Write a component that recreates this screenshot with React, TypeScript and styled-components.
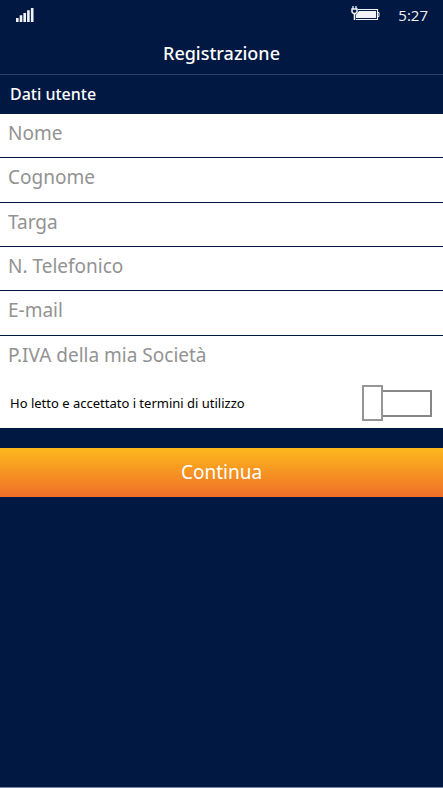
import React, { useState } from "react";
import styled, { createGlobalStyle } from "styled-components";

const NAVY = "#001842";

const GlobalStyle = createGlobalStyle`
  *, *::before, *::after { box-sizing: border-box; }
  body {
    margin: 0;
    background: ${NAVY};
    font-family: "Noto Sans", "Open Sans", sans-serif;
  }
`;

const Screen = styled.div`
  display: flex;
  flex-direction: column;
  min-height: 100vh;
  background: ${NAVY};
  border-bottom: 1px solid #7584a0;
`;

const StatusBar = styled.div`
  display: flex;
  align-items: center;
  height: 30px;
  padding: 0 15px 0 16px;
  color: #f1f3f7;
`;

const Signal = styled.svg`
  margin-right: auto;
`;

const Battery = styled.svg`
  margin-bottom: 2px;
`;

const Clock = styled.time`
  margin-left: 18px;
  font-family: "Open Sans", "Noto Sans", sans-serif;
  font-size: 15px;
  line-height: 30px;
`;

const Header = styled.header`
  height: 45px;
  border-bottom: 1px solid #2c406a;
`;

const Title = styled.h1`
  margin: 0;
  color: #fff;
  font-size: 18px;
  font-weight: 500;
  line-height: 46px;
  text-align: center;
`;

const SectionTitle = styled.h2`
  margin: 0;
  padding: 0 10px;
  color: #fff;
  font-size: 16px;
  font-weight: 500;
  line-height: 39px;
`;

const Fields = styled.div`
  display: grid;
  grid-auto-rows: 1fr;
  min-height: 266px;
  background: #fff;
`;

const Field = styled.input`
  width: 100%;
  min-width: 0;
  padding: 0 8px 5px;
  border: 0;
  border-bottom: 1px solid ${NAVY};
  border-radius: 0;
  outline: none;
  background: #fff;
  color: #222;
  font-family: "Noto Sans", "Open Sans", sans-serif;
  font-size: 19px;
  font-weight: 400;

  &:last-child { border-bottom-color: #fff; }
  &::placeholder { color: #929292; opacity: 1; }
`;

const TermsRow = styled.label`
  display: flex;
  align-items: center;
  justify-content: space-between;
  height: 48px;
  padding: 0 11px 2px 10px;
  background: #fff;
  color: #000;
  font-size: 13px;
`;

const Toggle = styled.input`
  appearance: none;
  display: flex;
  align-items: center;
  width: 70px;
  height: 36px;
  margin: 0;
  cursor: pointer;

  &::before {
    content: "";
    width: 21px;
    height: 36px;
    border: 2px solid #969696;
    background: #fff;
  }
  &::after {
    content: "";
    flex: 1;
    height: 27px;
    border: 2px solid #868686;
    border-left: 0;
  }
  &:checked { flex-direction: row-reverse; }
  &:checked::after {
    border-left: 2px solid #868686;
    border-right: 0;
    background: #f9a51f;
  }
`;

const Submit = styled.button`
  width: 100%;
  height: 49px;
  margin-top: 20px;
  padding: 0 0 2px;
  border: 0;
  background: linear-gradient(#fdb81c, #ef6f29);
  color: #fff;
  font-family: "Noto Sans", "Open Sans", sans-serif;
  font-size: 19px;
  cursor: pointer;
`;

const fields = [
  { name: "nome", label: "Nome", type: "text" },
  { name: "cognome", label: "Cognome", type: "text" },
  { name: "targa", label: "Targa", type: "text" },
  { name: "telefono", label: "N. Telefonico", type: "tel" },
  { name: "email", label: "E-mail", type: "email" },
  { name: "piva", label: "P.IVA della mia Società", type: "text" },
];

function SignalIcon() {
  return (
    <Signal width="18" height="14" viewBox="0 0 18 14" fill="currentColor" aria-hidden="true">
      <path d="M0 10h2.6v4H0zM3.7 7.3h2.6V14H3.7zM7.4 5H10v9H7.4zM11.1 2.3h2.6V14h-2.6zM14.9 0h2.6v14h-2.6z" />
    </Signal>
  );
}

function BatteryIcon() {
  return (
    <Battery width="29" height="16" viewBox="0 0 29 16" fill="none" stroke="currentColor" aria-hidden="true">
      <path d="M7 3.5h19.5v10H5" strokeWidth="1.2" />
      <path d="M8 5h17v7H5V8.5z" fill="currentColor" stroke="none" />
      <path d="M26.5 6.5H28v4h-1.5" strokeWidth="1" />
      <path d="M2 0v3M5 0v3" strokeWidth="1.3" />
      <path d="M1 3h5v3L4.5 7.5h-2L1 6z" strokeWidth="1.5" />
      <path d="M3.5 7.5V14" strokeWidth="1.6" />
    </Battery>
  );
}

export default function App() {
  const [accepted, setAccepted] = useState(false);
  return (
    <>
      <GlobalStyle />
      <Screen>
        <StatusBar>
          <SignalIcon />
          <BatteryIcon />
          <Clock>5:27</Clock>
        </StatusBar>
        <Header>
          <Title>Registrazione</Title>
        </Header>
        <form onSubmit={(e) => e.preventDefault()}>
          <SectionTitle>Dati utente</SectionTitle>
          <Fields>
            {fields.map((f) => (
              <Field key={f.name} name={f.name} type={f.type} placeholder={f.label} aria-label={f.label} />
            ))}
          </Fields>
          <TermsRow>
            Ho letto e accettato i termini di utilizzo
            <Toggle
              type="checkbox"
              role="switch"
              checked={accepted}
              onChange={(e) => setAccepted(e.target.checked)}
            />
          </TermsRow>
          <Submit type="submit">Continua</Submit>
        </form>
      </Screen>
    </>
  );
}
